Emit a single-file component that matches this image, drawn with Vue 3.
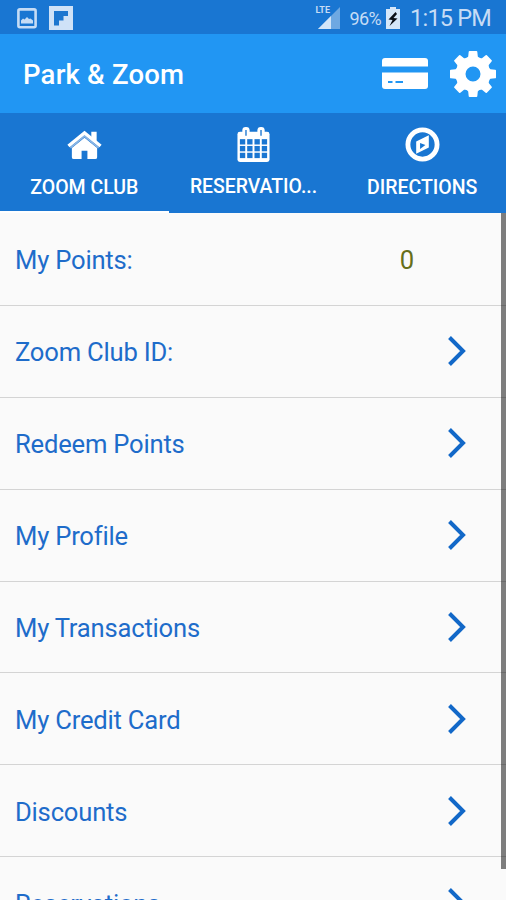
<template>
  <div class="screen">
    <div class="status-bar">
      <svg class="picture" viewBox="0 0 20 21">
        <rect x="1.4" y="1.4" width="17.2" height="17.8" rx="1.5" fill="none" stroke="#c5dcf5" stroke-width="2.6" />
        <path d="M4 15.500v-3l2-2 1.500 1 2.500-2.500 2 2 1.500-.5 2.500 2v3z" fill="#c5dcf5" />
      </svg>
      <svg class="flip" viewBox="0 0 24 24">
        <path d="M0 0h24v24H0z" fill="#cfe2f7" />
        <path d="M5 5h14v5h-4.500v4.500h-4.500v5H5z" fill="#1c76cf" />
      </svg>
      <div class="signal">
        <span class="lte">LTE</span>
        <svg viewBox="0 0 22 22">
          <path d="M22 0v22H0z" fill="#6ea8e2" />
          <path d="M13 9v13H0z" fill="#d3e5f8" />
        </svg>
      </div>
      <span class="percent">96%</span>
      <svg class="battery" viewBox="0 0 14 22">
        <path d="M4 0h6v2h4v20H0V2h4z" fill="#d6e7f9" />
        <path d="M9.500 5L2.500 12.500l4 .5-3 6 8-7.500-4-.5 3.500-4z" fill="#0a0f18" />
      </svg>
      <span class="clock">1:15 PM</span>
    </div>

    <header class="app-bar">
      <h1>Park &amp; Zoom</h1>
      <svg class="card" viewBox="0 0 46 32">
        <path d="M3 0h40q3 0 3 3v5.500H0V3q0-3 3-3z" />
        <path d="M0 14.500h46V28q0 3-3 3H3q-3 0-3-3z" />
        <path d="M6 24h4.500M13.500 24h7.500" class="dash" />
      </svg>
      <svg class="gear" viewBox="-23 -23 46 46">
        <path v-for="n in 8" :key="n" :d="tooth" :transform="`rotate(${n * 45})`" />
        <circle r="12.500" fill="none" stroke="#fff" stroke-width="10" />
      </svg>
    </header>

    <nav class="tabs">
      <div v-for="(tab, index) in tabs" :key="tab.icon" class="tab" :class="{ active: index === 0 }">
        <svg v-if="tab.icon === 'home'" class="tab-icon" viewBox="0 0 36 36">
          <path d="M5 21.500L18 11l13 10.500V31q0 2-2 2H21v-8.500h-6V33H7q-2 0-2-2z" />
          <path d="M25 5h5.500v12l-5.500-4.500z" />
          <path d="M3.500 21.500L18 9.500l14.500 12" class="eave" />
          <path d="M1.500 19.500L18 6 34.500 19.500" class="roof" />
        </svg>
        <svg v-else-if="tab.icon === 'calendar'" class="tab-icon" viewBox="0 0 36 36">
          <rect x="1.500" y="5" width="33" height="31" rx="2.500" />
          <rect x="6.500" y="0" width="7.500" height="10" rx="3.500" />
          <rect x="22" y="0" width="7.500" height="10" rx="3.500" />
          <path d="M10.250 3v6M25.750 3v6" class="ring" />
          <template v-for="r in 3" :key="r">
            <rect
              v-for="c in 4"
              :key="c"
              :x="c * 7.5 - 3.5"
              :y="r * 7 + 5.500"
              width="5.500"
              height="5.500"
              class="cell"
            />
          </template>
        </svg>
        <svg v-else class="tab-icon" viewBox="0 0 36 36">
          <circle cx="18" cy="18" r="15" class="rim" />
          <path d="M24.500 8.500v12.500l-13 6.500V15z" />
          <path d="M15.500 16.500l5.500 2-5.500 4z" class="cell" />
        </svg>
        <span>{{ tab.text }}</span>
      </div>
    </nav>

    <ul class="list">
      <li v-for="(item, index) in list" :key="index">
        <span>{{ item.text }}</span>
        <em v-if="item.value">{{ item.value }}</em>
        <svg v-else viewBox="0 0 20 32">
          <path d="M2.500 2.500L16 16 2.500 29.500" />
        </svg>
      </li>
    </ul>
    <div class="scrollbar"></div>
  </div>
</template>

<script setup>
import { ref } from 'vue'

const tooth = 'M-7.500 -14L-4.800 -17.500 -4.300 -22.200Q-4.200 -23 -3.400 -23H3.400Q4.200 -23 4.300 -22.200L4.800 -17.500 7.500 -14z'

const tabs = ref([
  { icon: 'home', text: 'ZOOM CLUB' },
  { icon: 'calendar', text: 'RESERVATIO...' },
  { icon: 'compass', text: 'DIRECTIONS' }
])

const list = ref([
  { text: 'My Points:', value: '0' },
  { text: 'Zoom Club ID:' },
  { text: 'Redeem Points' },
  { text: 'My Profile' },
  { text: 'My Transactions' },
  { text: 'My Credit Card' },
  { text: 'Discounts' },
  { text: 'Reservations' }
])
</script>

<style>
body {
  margin: 0;
}
</style>

<style scoped>
.screen {
  position: relative;
  display: flex;
  flex-direction: column;
  height: 900px;
  overflow: hidden;
  background: #fafafa;
  font-family: Roboto, 'Liberation Sans', sans-serif;
}
.screen svg {
  display: block;
  flex: none;
}
.status-bar {
  display: flex;
  align-items: center;
  flex: none;
  box-sizing: border-box;
  height: 34px;
  padding: 2px 15px 0 17px;
  background: #1976d2;
  color: #c6dcf5;
}
.picture {
  width: 20px;
  height: 21px;
}
.flip {
  width: 24px;
  height: 24px;
  margin-left: 12px;
}
.signal {
  position: relative;
  margin-left: auto;
}
.signal svg {
  width: 22px;
  height: 22px;
}
.lte {
  position: absolute;
  left: -3px;
  top: -1px;
  font-size: 9px;
  line-height: 9px;
  font-weight: 700;
}
.percent {
  margin-left: 9px;
  font-size: 18px;
  letter-spacing: -0.6px;
}
.battery {
  width: 14px;
  height: 22px;
  margin-left: 5px;
}
.clock {
  margin-left: 10px;
  font-size: 23.5px;
  letter-spacing: -0.8px;
}
.app-bar {
  display: flex;
  align-items: center;
  flex: none;
  box-sizing: border-box;
  height: 79px;
  padding: 0 10px 0 23px;
  background: #2196f3;
}
.app-bar h1 {
  flex: 1;
  margin: 0;
  padding-top: 2px;
  color: #fff;
  font-size: 27.5px;
  letter-spacing: 0.2px;
  font-weight: 500;
}
.card {
  width: 46px;
  height: 32px;
  fill: #fff;
}
.card .dash {
  stroke: #2196f3;
  stroke-width: 2;
}
.gear {
  width: 46px;
  height: 46px;
  margin-left: 22px;
  fill: #fff;
}
.tabs {
  display: grid;
  grid-template-columns: repeat(3, 1fr);
  flex: none;
  height: 100px;
  background: #1976d2;
}
.tab {
  display: flex;
  flex-direction: column;
  align-items: center;
  box-sizing: border-box;
  padding: 14px 0 0 1px;
  color: #fff;
  font-size: 19.5px;
  line-height: 28px;
  font-weight: 500;
}
.tab:nth-child(2) {
  font-size: 19.4px;
  line-height: 26px;
}
.tab.active {
  padding-left: 0;
  border-bottom: 2px solid #fff;
}
.tab-icon {
  width: 35px;
  height: 35px;
  margin-bottom: 12px;
  fill: #fff;
}
.roof {
  fill: none;
  stroke: #fff;
  stroke-width: 3.5;
}
.eave {
  fill: none;
  stroke: #8fb8e6;
  stroke-width: 1.5;
}
.rim {
  fill: none;
  stroke: #fff;
  stroke-width: 5;
}
.ring {
  stroke: #5f9fdf;
  stroke-width: 2;
}
.cell {
  fill: #1976d2;
}
.list {
  margin: 0;
  padding: 1px 0 0;
  list-style: none;
}
.list li {
  display: flex;
  align-items: center;
  justify-content: space-between;
  box-sizing: border-box;
  height: 91.9px;
  padding: 2px 39px 0 15px;
  border-bottom: 1px solid #d4d4d4;
  color: #1e6cca;
  font-size: 25.6px;
  letter-spacing: -0.2px;
}
.list em {
  padding-right: 53px;
  color: #666f1a;
  font-style: normal;
}
.list svg {
  width: 20px;
  height: 32px;
  margin-top: -2px;
}
.list path {
  fill: none;
  stroke: #1268c8;
  stroke-width: 4;
}
.scrollbar {
  position: absolute;
  top: 213px;
  right: 0;
  width: 5px;
  height: 656px;
  background: rgba(0, 0, 0, 0.5);
}
</style>
